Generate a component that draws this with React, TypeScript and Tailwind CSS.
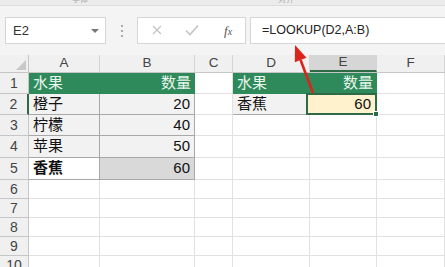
import React from "react"

const cjk = { fontFamily: '"Liberation Sans", "Noto Sans CJK SC", sans-serif' }

type Cell = { text?: string; kind: "empty" | "head" | "data" | "plain" | "dark" | "sel"; align?: "l" | "r"; bold?: boolean }

const cols = [71, 95, 38, 77, 67, 68]
const heights = [21, 21, 21, 22, 22, 19, 19, 19, 19, 19]

const E: Cell = { kind: "empty" }

const rows: Cell[][] = [
  [
    { text: "水果", kind: "head", align: "l" },
    { text: "数量", kind: "head", align: "r" },
    E,
    { text: "水果", kind: "head", align: "l" },
    { text: "数量", kind: "head", align: "r" },
    E,
  ],
  [
    { text: "橙子", kind: "data", align: "l" },
    { text: "20", kind: "data", align: "r" },
    E,
    { text: "香蕉", kind: "data", align: "l" },
    { text: "60", kind: "sel", align: "r" },
    E,
  ],
  [{ text: "柠檬", kind: "data", align: "l" }, { text: "40", kind: "data", align: "r" }, E, E, E, E],
  [{ text: "苹果", kind: "data", align: "l" }, { text: "50", kind: "data", align: "r" }, E, E, E, E],
  [
    { text: "香蕉", kind: "plain", align: "l", bold: true },
    { text: "60", kind: "dark", align: "r" },
    E,
    E,
    E,
    E,
  ],
  [E, E, E, E, E, E],
  [E, E, E, E, E, E],
  [E, E, E, E, E, E],
  [E, E, E, E, E, E],
  [E, E, E, E, E, E],
]

const cellClass = (c: Cell) => {
  switch (c.kind) {
    case "head":
      return "bg-[#2f8a5b] text-[#e8f6ec] border-b border-[#2f8a5b]"
    case "data":
      return "bg-[#f2f2f2] text-[#111] border-r border-b border-[#a8a8a8]"
    case "plain":
      return "bg-white text-[#111] border-r border-b border-[#a8a8a8]"
    case "dark":
      return "bg-[#d9d9d9] text-[#111] border-r border-b border-[#a8a8a8]"
    case "sel":
      return "bg-[#fff2cc] text-[#111] border-2 border-[#2d6a45] relative -ml-[4px] -mt-[1px]"
    default:
      return "bg-white border-r border-b border-[#e1e1e1]"
  }
}

function FormulaBar() {
  return (
    <div className="flex items-center h-[49px] pt-[11px] pb-[11px] pl-[5px] gap-0">
      <div className="flex items-center justify-between w-[101px] h-[27px] bg-white border border-[#d6d6d6] pl-[7px] pr-[6px]">
        <span className="text-[13px] text-[#333]">E2</span>
        <span className="w-0 h-0 border-l-[4px] border-r-[4px] border-t-[4px] border-l-transparent border-r-transparent border-t-[#777]" />
      </div>
      <div className="flex flex-col gap-[3px] w-[31px] items-center">
        <span className="w-[2px] h-[2px] bg-[#aaa]" />
        <span className="w-[2px] h-[2px] bg-[#aaa]" />
        <span className="w-[2px] h-[2px] bg-[#aaa]" />
      </div>
      <div className="flex items-center w-[109px] h-[27px] bg-white border border-[#d6d6d6]">
        <svg width="109" height="27" viewBox="0 0 109 27">
          <path d="M15 9 L23 17 M23 9 L15 17" stroke="#c4c4c4" strokeWidth="1.3" fill="none" />
          <path d="M48 13.5 L52 17.5 L60 8.5" stroke="#c4c4c4" strokeWidth="1.6" fill="none" />
        </svg>
        <span className="-ml-[23px] text-[13px] italic text-[#555]" style={{ fontFamily: '"Liberation Serif", serif' }}>
          f<span className="text-[10px]">x</span>
        </span>
      </div>
      <div className="ml-[4px] flex-1 h-[27px] bg-white border border-[#d6d6d6] border-r-0 flex items-center pl-[11px]">
        <span className="text-[12.5px] text-[#222]">=LOOKUP(D2,A:B)</span>
      </div>
    </div>
  )
}

export default function App() {
  const letters = ["A", "B", "C", "D", "E", "F"]
  return (
    <div className="relative w-[445px] h-[267px] overflow-hidden bg-[#f4f4f4]" style={cjk}>
      <div className="h-[6px] bg-[#ececec] border-b border-[#dcdcdc] flex text-[8px] text-[#aaa] leading-none">
        <span className="ml-[72px] -mt-[4px]">字体</span>
        <span className="ml-[190px] -mt-[4px]">对齐</span>
      </div>
      <FormulaBar />
      <div className="bg-white">
        <div className="flex h-[18px] bg-[#f0f0f0] border-b border-[#c6c6c6]">
          <div className="w-[29px] border-r border-[#c6c6c6] flex items-end justify-end pr-[2px] pb-[2px]">
            <span className="w-0 h-0 border-l-[10px] border-b-[10px] border-l-transparent border-b-[#c8c8c8]" />
          </div>
          {letters.map((l, i) => (
            <div
              key={l}
              style={{ width: cols[i] }}
              className={`flex items-center justify-center text-[13.5px] text-[#444] border-r border-[#d4d4d4] ${
                l === "E" ? "bg-[#d6d6d6] border-b-2 border-b-[#2d6a45]" : ""
              }`}
            >
              {l}
            </div>
          ))}
        </div>
        {rows.map((r, ri) => (
          <div key={ri} className="flex" style={{ height: heights[ri] }}>
            <div
              className={`w-[29px] shrink-0 flex items-center justify-center text-[14px] text-[#444] bg-[#f0f0f0] border-b border-[#c6c6c6] ${
                ri === 1 ? "bg-[#d6d6d6] border-r-2 border-r-[#2d6a45]" : "border-r border-r-[#c6c6c6]"
              }`}
            >
              {ri + 1}
            </div>
            {r.map((c, ci) => (
              <div
                key={ci}
                style={{ width: c.kind === "sel" ? cols[ci] + 4 : cols[ci], height: c.kind === "sel" ? heights[ri] + 1 : undefined }}
                className={`shrink-0 flex items-center text-[15px] px-[4px] ${cellClass(c)} ${
                  c.align === "r" ? "justify-end" : "justify-start"
                } ${c.bold ? "font-bold" : ""}`}
              >
                {c.text}
                {c.kind === "sel" && (
                  <span className="absolute -right-[4px] -bottom-[4px] w-[6px] h-[6px] bg-[#2d6a45] border border-white" />
                )}
              </div>
            ))}
          </div>
        ))}
      </div>
      <svg className="absolute left-0 top-0 pointer-events-none" width="445" height="267" viewBox="0 0 445 267">
        <line x1="313" y1="93" x2="300.6" y2="60" stroke="#d9261c" strokeWidth="2.6" />
        <polygon points="295,45 306.5,57.8 294.8,62.3" fill="#d9261c" />
      </svg>
    </div>
  )
}
